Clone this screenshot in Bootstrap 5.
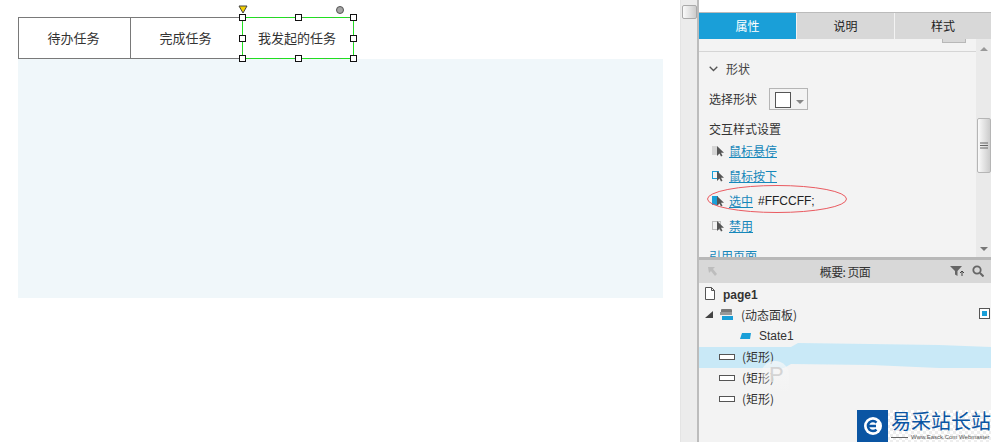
<!doctype html>
<html lang="zh"><head><meta charset="utf-8"><title>Axure</title>
<link rel="stylesheet" href="https://cdn.jsdelivr.net/npm/bootstrap@5.3.0/dist/css/bootstrap.min.css">
<style>
html,body{margin:0;height:442px;overflow:hidden;background:#fff}
body,.app{font-family:"Noto Sans CJK SC","Liberation Sans",sans-serif;font-size:12px;color:#333;line-height:16px}
.app{width:991px;height:442px}
.canvas{width:680px;height:442px;padding:17px 0 0 18px;position:relative}
.wtab{width:113px;height:42px;border:1px solid #797979;margin-left:-1px;background:#fff;font-size:13px;padding-right:2px}
.wtab:first-child{margin-left:0}
.wtab.sel{border:0;margin-left:-1px;width:112px}
.dpanel{width:645px;height:239px;background:#f0f7fa}
.ov{position:absolute;left:0;top:0;pointer-events:none;overflow:visible}
.gutter{width:19px;height:442px;background:#ececec;border-left:1px solid #e4e4e4;border-right:2px solid #bcbcbc;padding:5px 0 0 1px;flex:none}
.gthumb{width:15px;height:14px;border:1px solid #aaa;border-radius:2px;background:linear-gradient(90deg,#fafafa,#ccc)}
.side{width:292px;height:442px;position:relative;background:#f3f3f3}
.topstrip{height:13px;background:#fff;border-bottom:1px solid #bbb}
.ptabs{height:26px}
.ptab{width:98px;background:#d8d8d8;border-right:1px solid #f3f3f3;color:#222}
.ptab.on{background:#1a9fd8;color:#fff}
.ptab:last-child{flex:1;border:0}
.props{height:218px;position:relative;overflow:hidden}
.pscroll{position:absolute;right:0;top:0;bottom:0;width:15px;background:#eaeaea}
.pthumb{position:absolute;left:1px;width:14px;top:79px;height:55px;background:linear-gradient(90deg,#fafafa,#ccc);border:1px solid #b5b5b5;border-radius:2px;display:flex;align-items:center;justify-content:center}
.parrow{position:absolute;left:4px;width:0;height:0;border-left:4px solid transparent;border-right:4px solid transparent}
.parrow.up{top:8px;border-bottom:4px solid #999}
.parrow.down{bottom:6px;border-top:4px solid #777}
.pbtn{position:absolute;left:243px;top:0;width:24px;height:4px;background:#d8d8d8;border:1px solid #b8b8b8;border-top:0}
.pline{position:absolute;left:0;width:277px;top:12px;border-top:1px solid #d5d5d5}
.pbody{padding:22px 0 0 10px;width:277px}
.phead{height:16px;color:#444}
.shapepick{width:39px;height:22px;border:1px solid #b5b5b5;margin-left:12px;padding:3px 0 0 5px}
.shapeswatch{width:16px;height:16px;border:1px solid #555;background:#fff}
.tri{width:0;height:0;border-left:4px solid transparent;border-right:4px solid transparent;border-top:4px solid #888;margin-left:5px}
.rowselect{height:23px;margin-top:10px}
.stlabel{margin-top:11px}
.lnklist{margin-top:1px}
.lnk{color:#1687ba;text-decoration:underline}
.lnkplain{color:#1687ba;margin-top:10px}
.ilink{height:25px;gap:5px;padding-left:3px}
.ilink svg{flex:none}
.hexv{margin-left:0;color:#222}
.ohead{height:26px;background:#d8d8d8;border-top:3px solid #b8b8b8;position:relative;text-align:center;color:#333;line-height:23px}
.ohead-t{letter-spacing:-.6px}
.backic{position:absolute;left:8px;top:6px}
.otools{position:absolute;right:7px;top:5px;gap:6px}
.otree{position:relative}
.orow{height:21px;position:relative;z-index:1}
.pg{font-weight:700;font-family:"Liberation Sans",sans-serif;color:#333;padding-top:2px}
.ind0{padding-left:6px;gap:8px}
.ind0b{padding-left:6px;gap:6px}
.ind1{padding-left:20px;gap:7px}
.ind2{padding-left:41px;gap:8px}
.dyn{margin-left:2px}
.rectic{width:16px;height:6px;border:1px solid #555;background:#fff}
.lat{font-family:"Liberation Sans",sans-serif}
.markbox{position:absolute;right:1px;top:4px;width:11px;height:11px;border:1px solid #555;padding:2px;background:#fff}
.markin{background:#1a9fd8;width:100%;height:100%}
.hl{position:absolute;left:0;top:60px}
.wm{position:absolute;left:62px;top:78px;width:28px;height:32px;border-radius:14px 14px 0 0;background:linear-gradient(#f7f7f7cc,#f3f3f300);color:#d4d4d4;font:400 22px/28px "Liberation Sans",sans-serif;padding-left:8px;z-index:3}
.logo{position:absolute;left:158px;bottom:0;width:134px;height:32px;background-color:#fff;background-image:linear-gradient(45deg,#eee 25%,transparent 25%,transparent 75%,#eee 75%),linear-gradient(45deg,#eee 25%,transparent 25%,transparent 75%,#eee 75%);background-size:6px 6px;background-position:0 0,3px 3px;gap:3px;z-index:2}
.lsq{width:31px;height:32px;background:#0a55a3;flex:none;display:flex;align-items:center;justify-content:center}
.ltx{color:#0a55a3;font-size:20px;line-height:20px;font-weight:400;white-space:nowrap;margin-top:1px}
.lsub{font-size:6px;line-height:8px;color:#555;white-space:nowrap;font-family:"Liberation Sans",sans-serif;display:flex;align-items:center;gap:3px;margin-top:2px}
.lsub i{display:block;width:17px;border-top:1px solid #666}
</style></head>
<body>
<div class="app d-flex">
 <div class="canvas">
  <div class="d-flex">
   <div class="wtab d-flex align-items-center justify-content-center">待办任务</div>
   <div class="wtab d-flex align-items-center justify-content-center">完成任务</div>
   <div class="wtab sel d-flex align-items-center justify-content-center">我发起的任务</div>
  </div>
  <div class="dpanel"></div>
  <svg class="ov" width="680" height="100">
   <rect x="242.500" y="17.500" width="111" height="41" fill="none" stroke="#1fe01f"/>
   <rect x="242.500" y="17.500" width="111" height="41" fill="none" stroke="#777" stroke-dasharray="1 14"/>
   <line x1="18" y1="58.500" x2="242" y2="58.500" stroke="#797979"/>
   <path d="M239 6h8l-4 7z" fill="#f5d000" stroke="#444"/>
   <circle cx="340" cy="10" r="3.500" fill="#a5a5a5" stroke="#555"/>
   <g fill="#fff" stroke="#111">
    <rect x="239.500" y="14.500" width="6" height="6"/><rect x="295.500" y="14.500" width="6" height="6"/><rect x="350.500" y="14.500" width="6" height="6"/>
    <rect x="239.500" y="35.500" width="6" height="6"/><rect x="350.500" y="35.500" width="6" height="6"/>
    <rect x="239.500" y="55.500" width="6" height="6"/><rect x="295.500" y="55.500" width="6" height="6"/><rect x="350.500" y="55.500" width="6" height="6"/>
   </g>
  </svg>
 </div>
 <div class="gutter"><div class="gthumb"></div></div>
 <div class="side">
  <div class="topstrip"></div>
  <div class="ptabs d-flex text-center">
   <div class="ptab on d-flex align-items-center justify-content-center">属性</div>
   <div class="ptab d-flex align-items-center justify-content-center">说明</div>
   <div class="ptab d-flex align-items-center justify-content-center">样式</div>
  </div>
  <div class="props">
   <div class="pbtn"></div>
   <div class="pline"></div>
   <div class="pscroll">
    <div class="parrow up"></div>
    <div class="pthumb"><svg width="8" height="8"><path d="M0 1h8M0 3.500h8M0 6h8" stroke="#666"/></svg></div>
    <div class="parrow down"></div>
   </div>
   <div class="pbody">
    <div class="phead d-flex align-items-center gap-2"><svg width="9" height="6" viewBox="0 0 9 6"><path d="M.7 .7 4.500 4.500 8.300 .7" fill="none" stroke="#555" stroke-width="1.300"/></svg><span>形状</span></div>
    <div class="rowselect d-flex align-items-center"><span>选择形状</span><div class="shapepick d-flex"><div class="shapeswatch"></div><div class="tri mt-2"></div></div></div>
    <div class="stlabel">交互样式设置</div>
    <div class="lnklist d-flex flex-column">
     <div class="ilink d-flex align-items-center"><svg width="12" height="12"><rect y="1" width="5" height="9" fill="#d5d5d5"/><path d="M5 1v10l2.500-2.500 1.500 3 1.500-.8-1.500-3H12z" fill="#555"/></svg><span class="lnk">鼠标悬停</span></div>
     <div class="ilink d-flex align-items-center"><svg width="12" height="12"><rect x=".5" y="1.500" width="6" height="7" fill="none" stroke="#1a9fd8"/><path d="M5 1v10l2.500-2.500 1.500 3 1.500-.8-1.500-3H12z" fill="#555"/></svg><span class="lnk">鼠标按下</span></div>
     <div class="ilink d-flex align-items-center"><svg width="12" height="12"><rect y="1" width="6" height="9" fill="#1a9fd8"/><path d="M5 1v10l2.500-2.500 1.500 3 1.500-.8-1.500-3H12z" fill="#555"/></svg><span class="lnk">选中</span><span class="lat hexv">#FFCCFF;</span></div>
     <div class="ilink d-flex align-items-center"><svg width="12" height="12"><rect x=".5" y="1.500" width="8" height="8" fill="none" stroke="#888" stroke-dasharray="1 1"/><path d="M5 1v10l2.500-2.500 1.500 3 1.500-.8-1.500-3H12z" fill="#555"/></svg><span class="lnk">禁用</span></div>
    </div>
    <div class="lnkplain">引用页面</div>
   </div>
  </div>
  <svg class="ov" width="292" height="260"><ellipse cx="78" cy="199" rx="69.500" ry="13.500" fill="none" stroke="#ea5a60"/></svg>
  <div class="ohead"><span class="ohead-t">概要: 页面</span>
   <svg class="backic" width="11" height="11"><path d="M1 1h7L6 3l4 5-2 2-4-5-2 2z" fill="#bdbdbd"/></svg>
   <div class="otools d-flex align-items-center">
    <svg width="16" height="12"><path d="M0 1h12L7.500 6v5L5 9.500V6z" fill="#666"/><path d="M12 11V6m-2 2 2-2 2 2" stroke="#444" fill="none"/></svg>
    <svg width="12" height="12"><circle cx="5" cy="5" r="3.700" fill="none" stroke="#666" stroke-width="1.800"/><path d="M8 8l3.500 3.500" stroke="#666" stroke-width="2"/></svg>
   </div>
  </div>
  <div class="otree">
   <div class="orow d-flex align-items-center ind0"><svg width="10" height="13"><path d="M.5 .5h6l3 3v9h-9zM6.500 .5v3h3" fill="#fff" stroke="#555"/></svg><span class="pg">page1</span></div>
   <div class="orow d-flex align-items-center ind0b"><svg width="9" height="9"><path d="M0 8 8 1v7z" fill="#444"/></svg><svg width="13" height="11"><rect x="1" y="0" width="11" height="5" rx="1" fill="#777"/><rect x="0" y="3" width="12" height="3" fill="#999"/><rect x="2" y="7" width="11" height="4" fill="#1a9fd8"/></svg><span class="dyn">(动态面板)</span><div class="markbox"><div class="markin"></div></div></div>
   <div class="orow d-flex align-items-center ind2"><svg width="11" height="6"><path d="M2 0h9l-1 6H0z" fill="#1a9fd8"/></svg><span class="lat">State1</span></div>
   <svg class="hl" width="292" height="30"><path d="M0 4H92L99 0 171 1 240 2 292 4V25L240 25 172 22 92 21 85 25H0z" fill="#c9e9f7"/></svg>
   <div class="orow d-flex align-items-center ind1"><div class="rectic"></div><span>(矩形)</span></div>
   <div class="orow d-flex align-items-center ind1"><div class="rectic"></div><span>(矩形)</span></div>
   <div class="orow d-flex align-items-center ind1"><div class="rectic"></div><span>(矩形)</span></div>
   <div class="wm">P</div>
  </div>
  <div class="logo d-flex">
   <div class="lsq"><svg width="20" height="20" viewBox="0 0 20 20"><circle cx="10" cy="10" r="9" fill="#fff"/><path d="M4 10h9M13.500 6.500a5 5 0 1 0 0 7" fill="none" stroke="#0a55a3" stroke-width="2.500"/></svg></div>
   <div><div class="ltx">易采站长站</div><div class="lsub"><i></i>Www.Easck.Com Webmaster</div></div>
  </div>
 </div>
</div>
</body></html>
